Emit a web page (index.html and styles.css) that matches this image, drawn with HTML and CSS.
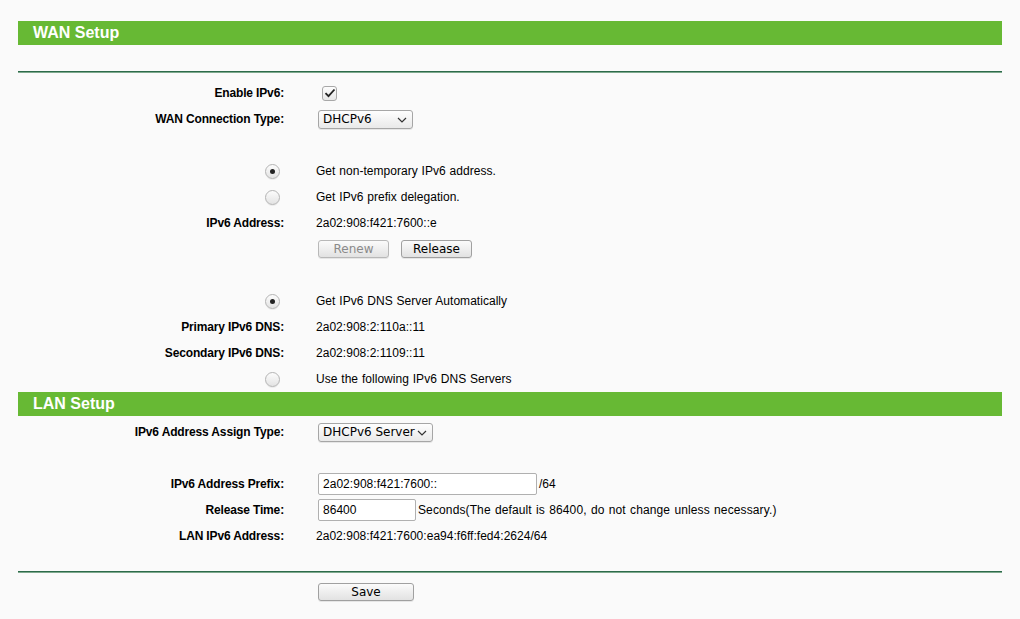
FILE: index.html
```html
<!DOCTYPE html>
<html>
<head>
<meta charset="utf-8">
<link rel="stylesheet" href="styles.css">
</head>
<body>
<div class="page">
  <div class="bar">WAN Setup</div>
  <div class="rule"></div>
  <div class="rows first">
    <div class="row"><div class="lbl">Enable IPv6:</div><div class="val"><span class="check"><svg width="12" height="10" viewBox="0 0 12 10"><path d="M1.5 5.2 L4.5 8.2 L10.5 1.5" fill="none" stroke="#222" stroke-width="1.8"/></svg></span></div></div>
    <div class="row"><div class="lbl">WAN Connection Type:</div><div class="val"><span class="select s1">DHCPv6<i class="chev"><svg width="10" height="6" viewBox="0 0 10 6"><path d="M1 1 L5 5 L9 1" fill="none" stroke="#333" stroke-width="1.2"/></svg></i></span></div></div>
    <div class="row"></div>
    <div class="row"><div class="lbl"><span class="radio on"></span></div><div class="val">Get non-temporary IPv6 address.</div></div>
    <div class="row"><div class="lbl"><span class="radio"></span></div><div class="val">Get IPv6 prefix delegation.</div></div>
    <div class="row"><div class="lbl">IPv6 Address:</div><div class="val">2a02:908:f421:7600::e</div></div>
    <div class="row"><div class="lbl"></div><div class="val"><span class="btn dis">Renew</span><span class="btn">Release</span></div></div>
    <div class="row"></div>
    <div class="row"><div class="lbl"><span class="radio on"></span></div><div class="val">Get IPv6 DNS Server Automatically</div></div>
    <div class="row"><div class="lbl">Primary IPv6 DNS:</div><div class="val">2a02:908:2:110a::11</div></div>
    <div class="row"><div class="lbl">Secondary IPv6 DNS:</div><div class="val">2a02:908:2:1109::11</div></div>
    <div class="row"><div class="lbl"><span class="radio"></span></div><div class="val">Use the following IPv6 DNS Servers</div></div>
  </div>
  <div class="bar lan">LAN Setup</div>
  <div class="rows second">
    <div class="row"><div class="lbl">IPv6 Address Assign Type:</div><div class="val"><span class="select s2">DHCPv6 Server<i class="chev"><svg width="10" height="6" viewBox="0 0 10 6"><path d="M1 1 L5 5 L9 1" fill="none" stroke="#333" stroke-width="1.2"/></svg></i></span></div></div>
    <div class="row"></div>
    <div class="row"><div class="lbl">IPv6 Address Prefix:</div><div class="val"><span class="input w1">2a02:908:f421:7600::</span><span class="after">/64</span></div></div>
    <div class="row"><div class="lbl">Release Time:</div><div class="val"><span class="input w2">86400</span><span class="after sec">Seconds(The default is 86400, do not change unless necessary.)</span></div></div>
    <div class="row"><div class="lbl">LAN IPv6 Address:</div><div class="val">2a02:908:f421:7600:ea94:f6ff:fed4:2624/64</div></div>
  </div>
  <div class="rule bottom"></div>
  <div class="row save"><div class="lbl"></div><div class="val"><span class="btn big">Save</span></div></div>
</div>
</body>
</html>
```
FILE: styles.css
```css
html, body { margin: 0; padding: 0; background: #fafafa; }
body { font-family: "Liberation Sans", Arial, sans-serif; font-size: 12px; color: #000; }
.page { padding: 21px 18px 0 18px; }
.bar { height: 24px; line-height: 24px; background: #67b934; color: #fff; font-weight: bold; font-size: 16px; padding-left: 15px; }
.rule { margin-top: 26px; height: 1px; background: #2d6b4b; border-bottom: 1px solid #7ea98e; }
.rows.first { padding-top: 7px; }
.rows.second { padding-top: 3px; }
.row { display: grid; grid-template-columns: 266px 1fr; column-gap: 32px; height: 26px; align-items: center; }
.lbl { text-align: right; font-weight: bold; display: flex; justify-content: flex-end; align-items: center; letter-spacing: -0.15px; }
.val { display: flex; align-items: center; letter-spacing: 0.03px; word-spacing: 0.5px; white-space: nowrap; }
.check { margin-left: 6px; width: 15px; height: 15px; border: 1px solid #a8a8a8; border-radius: 3px; background: linear-gradient(#fdfdfd, #e6e6e6); display: flex; align-items: center; justify-content: center; box-sizing: border-box; }
.select { margin-left: 2px; height: 19px; border: 1px solid #a6a6a6; border-radius: 3px; background: linear-gradient(#fefefe, #e9e9e9); font-family: "DejaVu Sans", sans-serif; font-size: 12px; letter-spacing: 0; word-spacing: 0; display: flex; align-items: center; padding-left: 4px; box-sizing: border-box; position: relative; box-shadow: 0 1px 0 rgba(0,0,0,0.08); }
.s1 { width: 95px; }
.s2 { width: 115px; }
.chev { position: absolute; right: 5px; top: 6px; display: flex; }
.radio { width: 15px; height: 15px; border: 1px solid #b4b4b4; border-radius: 50%; background: linear-gradient(#fcfcfc, #e3e3e3); margin-right: 4px; box-sizing: border-box; display: flex; align-items: center; justify-content: center; box-shadow: 0 1px 0 rgba(0,0,0,0.06); }
.radio.on::after { content: ""; width: 5px; height: 5px; border-radius: 50%; background: #222; }
.btn { margin-left: 2px; height: 18px; box-sizing: border-box; border: 1px solid #a0a0a0; border-radius: 3px; background: linear-gradient(#fbfbfb, #e2e2e2); font-family: "DejaVu Sans", sans-serif; font-size: 12px; letter-spacing: 0; word-spacing: 0; display: inline-flex; align-items: center; justify-content: center; width: 71px; box-shadow: 0 1px 0 rgba(0,0,0,0.08); }
.btn + .btn { margin-left: 12px; }
.btn.dis { color: #8a8a8a; border-color: #b8b8b8; }
.btn.big { width: 96px; }
.input { margin-left: 2px; height: 22px; box-sizing: border-box; border: 1px solid #b0b0b0; background: #fff; padding-left: 4px; display: flex; align-items: center; border-radius: 2px; }
.w1 { width: 219px; }
.w2 { width: 98px; }
.after { margin-left: 2px; }
.after.sec { letter-spacing: 0.12px; word-spacing: 0.8px; }
.rule.bottom { margin-top: 22px; }
.row.save { margin-top: 6px; }
```
